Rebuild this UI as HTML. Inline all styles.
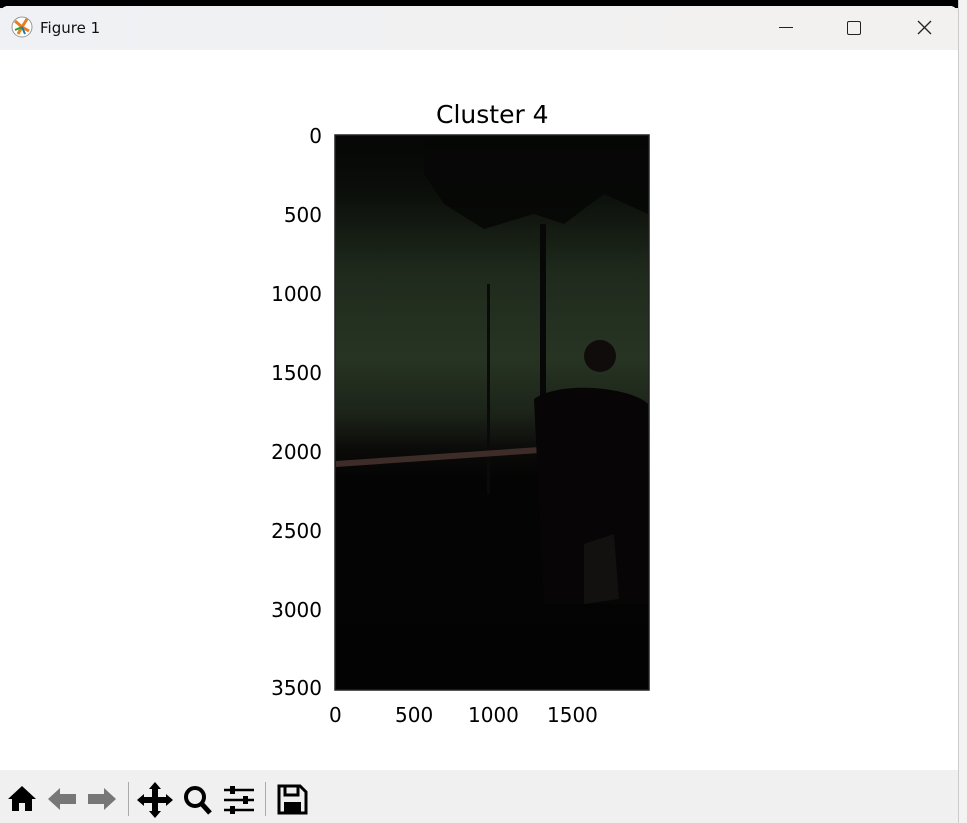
<!DOCTYPE html>
<html><head><style>
body{margin:0;width:967px;height:823px;overflow:hidden;background:#ececec;font-family:"Liberation Sans","DejaVu Sans",sans-serif;position:relative}
.top{position:absolute;left:0;top:0;width:967px;height:8px;background:#000}
.desk{position:absolute;left:958px;top:0;width:9px;height:823px;background:#f3f3f3;border-left:1px solid #ccc}
.win{position:absolute;left:0;top:6px;width:958px;height:817px;background:#fff;border-radius:8px 8px 0 0;overflow:hidden}
.title{height:44px;background:linear-gradient(90deg,#eff1f4,#f3f1ef);position:relative}
.title span{position:absolute;left:40px;top:13px;color:#111;font-family:"DejaVu Sans",sans-serif;font-size:15px}
.tb{position:absolute;left:0;top:764px;width:958px;height:53px;background:#f0f0f0}
.t{position:absolute;font-size:20px;color:#000;font-family:"DejaVu Sans",sans-serif;line-height:24px}
</style></head><body>
<div class="top"></div><div class="desk"></div>
<div class="win">
<div class="title">
<svg style="position:absolute;left:11px;top:10px" width="22" height="22" viewBox="0 0 22 22"><circle cx="11" cy="11" r="10" fill="#fff" stroke="#999"/><path d="M11 11L4 5M11 11L7 18M11 11L16 3M11 11L18 15" stroke="#e67e22" stroke-width="3"/><path d="M11 11L4 14" stroke="#2ca02c" stroke-width="2"/><path d="M11 11L14 18" stroke="#1f77b4" stroke-width="2"/></svg>
<span>Figure 1</span>
<div style="position:absolute;left:779px;top:21px;width:14px;height:1px;background:#222"></div>
<div style="position:absolute;left:847px;top:15px;width:12px;height:12px;border:1.3px solid #222;border-radius:2px"></div>
<svg style="position:absolute;left:917px;top:14px" width="15" height="15"><path d="M1 1L14 14M14 1L1 14" stroke="#222" stroke-width="1.3"/></svg>
</div>
<div class="t" style="left:436px;top:95px;font-size:25px;line-height:28px">Cluster 4</div>
<svg style="position:absolute;left:334px;top:128px" width="316" height="557">
<defs><linearGradient id="g" x1="0" y1="0" x2="0" y2="1"><stop offset="0" stop-color="#050605"/><stop offset="0.1" stop-color="#0b0e0a"/><stop offset="0.25" stop-color="#1f2a1c"/><stop offset="0.4" stop-color="#273423"/><stop offset="0.5" stop-color="#1c2419"/><stop offset="0.57" stop-color="#0a0a09"/><stop offset="0.62" stop-color="#040404"/><stop offset="1" stop-color="#030303"/></linearGradient></defs>
<rect x="1" y="1" width="314" height="555" fill="url(#g)" stroke="#222" stroke-width="1.5"/>
<path d="M90 5 L314 5 L314 80 L270 60 L230 90 L200 80 L150 95 L110 70 L90 40Z" fill="#060706" opacity="0.85"/>
<rect x="206" y="90" width="6" height="270" fill="#070707"/>
<rect x="153" y="150" width="3" height="210" fill="#0a0a0a"/>
<path d="M2 327 L220 312 L220 318 L2 333Z" fill="#3e2c29"/>
<path d="M200 265 C230 245 300 255 314 270 L314 470 L210 470Z" fill="#070505"/>
<circle cx="266" cy="222" r="16" fill="#100c0b"/>
<path d="M250 410 L280 400 L285 465 L250 470Z" fill="#121110"/>
</svg>
<div class="t" style="right:636px;top:118px">0</div>
<div class="t" style="right:636px;top:197px">500</div>
<div class="t" style="right:636px;top:276px">1000</div>
<div class="t" style="right:636px;top:355px">1500</div>
<div class="t" style="right:636px;top:434px">2000</div>
<div class="t" style="right:636px;top:513px">2500</div>
<div class="t" style="right:636px;top:592px">3000</div>
<div class="t" style="right:636px;top:670px">3500</div>
<div class="t" style="left:329px;top:697px">0</div>
<div class="t" style="left:395px;top:697px">500</div>
<div class="t" style="left:468px;top:697px">1000</div>
<div class="t" style="left:547px;top:697px">1500</div>
<div class="tb">
<svg width="330" height="53">
<path d="M8 29L22 16L36 29H32V41H25V33H19V41H12V29Z" fill="#000"/>
<path d="M48 29L60 18V24H76V34H60V40Z" fill="#777"/>
<path d="M116 29L104 18V24H88V34H104V40Z" fill="#777"/>
<rect x="128" y="12" width="1" height="34" fill="#aaa"/>
<path d="M155 12L161 19H158V27H166V24L173 30L166 36V33H158V41H161L155 48L149 41H152V33H144V36L137 30L144 24V27H152V19H149Z" fill="#000"/>
<circle cx="195" cy="27" r="9" fill="none" stroke="#000" stroke-width="4"/><path d="M201 33L210 43" stroke="#000" stroke-width="5"/>
<path d="M224 20H254M224 30H254M224 40H254" stroke="#000" stroke-width="2.5"/><rect x="230" y="16" width="5" height="8" fill="#000"/><rect x="243" y="26" width="5" height="8" fill="#000"/><rect x="230" y="36" width="5" height="8" fill="#000"/>
<rect x="265" y="12" width="1" height="34" fill="#aaa"/>
<path d="M279 16H300L306 22V43H279Z" fill="none" stroke="#000" stroke-width="3"/><rect x="285" y="16" width="13" height="9" fill="none" stroke="#000" stroke-width="3"/><rect x="284" y="32" width="17" height="10" fill="#000"/>
</svg>
</div>
</div>
</body></html>
